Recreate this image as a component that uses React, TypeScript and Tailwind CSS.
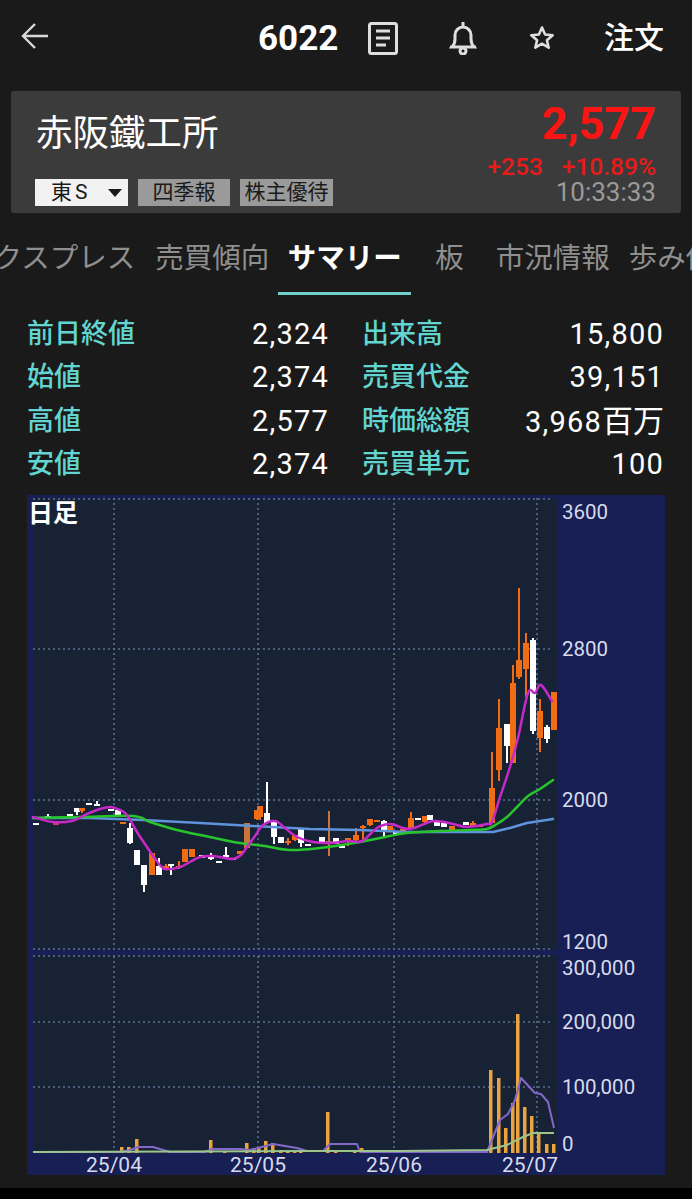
const W = '#ffffff';
const O = '#f26c13';
const M = '#c8743a';

// x, wick top, wick bottom, body top, body bottom, colour
const candles: [number, number, number, number, number, string][] = [
  [36, 823, 825, 823, 825, W], [48, 814, 819, 816, 819, W], [56, 822, 825, 822, 825, '#d9386a'],
  [70, 814, 819, 814, 819, W], [77, 808, 815, 808, 812, W], [82, 808, 813, 808, 811, O],
  [89, 803, 805, 803, 805, W], [97, 801, 806, 804, 806, W], [111, 809, 811, 809, 811, W],
  [118, 810, 815, 810, 815, W], [123, 822, 824, 822, 824, O], [130, 823, 844, 828, 843, W],
  [137, 850, 865, 850, 865, W], [144, 865, 892, 865, 885, W], [152, 853, 875, 853, 875, O],
  [159, 858, 875, 866, 875, W], [166, 864, 870, 866, 870, O], [171, 864, 875, 864, 866, W],
  [179, 861, 869, 866, 868, O], [185, 849, 862, 849, 862, O], [192, 849, 857, 849, 857, O],
  [202, 855, 858, 855, 858, W], [211, 853, 860, 855, 859, W], [219, 861, 863, 861, 863, W],
  [226, 847, 857, 855, 857, W], [233, 858, 860, 858, 860, W], [240, 851, 854, 851, 854, O],
  [247, 823, 848, 823, 848, M], [257, 810, 820, 810, 819, O], [260, 806, 820, 806, 817, O],
  [267, 782, 823, 813, 823, W], [274, 821, 844, 822, 837, W], [281, 837, 843, 837, 843, W],
  [288, 838, 845, 841, 843, O], [295, 835, 841, 835, 840, O], [301, 829, 847, 829, 843, W],
  [308, 844, 846, 844, 846, W], [322, 837, 844, 837, 844, W], [329, 811, 856, 841, 844, M],
  [336, 838, 844, 838, 844, W], [342, 846, 848, 846, 848, W], [348, 838, 846, 838, 840, O],
  [356, 828, 841, 835, 840, O], [363, 825, 840, 826, 828, O], [370, 819, 826, 819, 825, O],
  [377, 820, 822, 820, 822, O], [384, 820, 837, 821, 830, W], [390, 826, 831, 826, 831, O],
  [396, 832, 834, 832, 834, W], [403, 829, 831, 829, 831, O], [411, 812, 829, 818, 829, O],
  [418, 818, 820, 818, 820, W], [425, 816, 825, 816, 822, O], [430, 815, 820, 815, 820, W],
  [437, 821, 826, 821, 826, W], [444, 823, 827, 823, 827, W], [452, 826, 830, 826, 830, O],
  [466, 822, 825, 822, 825, W], [473, 821, 826, 823, 826, O], [480, 825, 827, 825, 827, O],
  [492, 752, 823, 788, 823, O], [499, 699, 781, 728, 770, O], [507, 724, 763, 724, 746, W],
  [513, 665, 763, 683, 763, O], [519, 588, 679, 660, 677, O], [526, 633, 697, 643, 669, O],
  [533, 638, 734, 640, 731, W], [540, 699, 752, 711, 738, O], [547, 725, 743, 727, 739, W],
  [554, 692, 730, 692, 730, O],
];

const ma5: [number, number][] = [
  [33, 817], [53, 822], [72, 821], [85, 815], [97, 810], [110, 807], [120, 810], [127, 815], [137, 832], [147, 847],
  [156, 860], [165, 869], [180, 867], [190, 862], [200, 857], [213, 856], [225, 858], [233, 859], [241, 855], [247, 847],
  [255, 836], [263, 825], [275, 821], [285, 828], [297, 837], [313, 842], [330, 843], [348, 841], [362, 841], [377, 828],
  [390, 824], [410, 829], [433, 821], [453, 824], [467, 827], [487, 824], [492, 822], [500, 797], [510, 767], [518, 738],
  [528, 693], [535, 693], [541, 685], [552, 701],
];
const ma25: [number, number][] = [
  [33, 818], [80, 817], [133, 816], [150, 822], [177, 830], [210, 837], [240, 843], [265, 846], [290, 850], [320, 848],
  [360, 842], [385, 837], [407, 833], [440, 831], [470, 830], [487, 829], [497, 824], [507, 817], [517, 807], [528, 796],
  [540, 789], [553, 780],
];
const ma75 = '33,818 90,818 143,820 200,823 253,826 310,829 360,830 407,832 450,832 493,832 510,828 527,823 540,821 553,819';
const volMa = '33,1152 120,1152 130,1150 138,1147 153,1147 170,1152 205,1152 212,1149 240,1149 250,1150 258,1148 273,1144 297,1148 307,1151 323,1151 330,1144 357,1144 360,1152 487,1152 500,1120 508,1114 515,1100 521,1078 535,1093 541,1094 548,1102 554,1128';
const volMa2 = '33,1152 300,1151 400,1151 487,1150 507,1145 523,1137 533,1133 554,1133';

// x, top of the volume bar
const volumes: [number, number][] = [
  [122, 1147], [129, 1147], [137, 1139], [211, 1140], [225, 1151], [247, 1143], [254, 1148], [259, 1148],
  [266, 1141], [273, 1143], [281, 1150], [288, 1151], [295, 1151], [301, 1151], [328, 1112], [336, 1151],
  [355, 1150], [362, 1148], [410, 1151], [491, 1070], [499, 1078], [506, 1128], [513, 1103], [518, 1014],
  [525, 1107], [532, 1116], [539, 1132], [547, 1144], [554, 1144],
];

const stats = [
  ['前日終値', '2,324', '出来高', '15,800', ''],
  ['始値', '2,374', '売買代金', '39,151', ''],
  ['高値', '2,577', '時価総額', '3,968', '百万'],
  ['安値', '2,374', '売買単元', '100', ''],
];

const priceLabels: [string, number][] = [
  ['3600', 519], ['2800', 656], ['2000', 807], ['1200', 949],
  ['300,000', 975], ['200,000', 1029], ['100,000', 1094], ['0', 1151],
];

const dates: [string, number][] = [['25/04', 114], ['25/05', 258], ['25/06', 394], ['25/07', 530]];

// catmull-rom through the points, the moving averages are drawn smooth
function smooth(pts: [number, number][]) {
  let d = `M${pts[0][0]} ${pts[0][1]}`;
  for (let i = 0; i < pts.length - 1; i++) {
    const p0 = pts[Math.max(i - 1, 0)];
    const p1 = pts[i];
    const p2 = pts[i + 1];
    const p3 = pts[Math.min(i + 2, pts.length - 1)];
    const c1x = p1[0] + (p2[0] - p0[0]) / 6;
    const c1y = p1[1] + (p2[1] - p0[1]) / 6;
    const c2x = p2[0] - (p3[0] - p1[0]) / 6;
    const c2y = p2[1] - (p3[1] - p1[1]) / 6;
    d += ` C${c1x} ${c1y} ${c2x} ${c2y} ${p2[0]} ${p2[1]}`;
  }
  return d;
}

function Chart() {
  return (
    <svg viewBox="27 495 638 680" className="block h-[680px] w-[638px]">
      <rect x="27" y="495" width="638" height="680" fill="#171f54" />
      <rect x="33" y="498" width="525" height="452" fill="#182235" />
      <rect x="33" y="955" width="525" height="198" fill="#182235" />
      <g stroke="#5f7194" strokeWidth="1.5" strokeDasharray="2 3">
        {[499, 649, 800, 949, 956, 1022, 1087].map((y) => (
          <line key={y} x1="33" x2="550" y1={y} y2={y} />
        ))}
        {[114, 258, 394, 537].map((x) => (
          <g key={x}>
            <line x1={x} x2={x} y1="498" y2="949" />
            <line x1={x} x2={x} y1="956" y2="1153" />
          </g>
        ))}
      </g>
      {candles.map(([x, wt, wb, bt, bb, c], i) => (
        <g key={i} fill={c}>
          <rect x={x - 1} y={wt} width="2" height={wb - wt} />
          <rect x={x - 3} y={bt} width="6" height={bb - bt} />
        </g>
      ))}
      <g fill="none" strokeWidth="2.5" strokeLinejoin="round" strokeLinecap="round">
        <polyline points={ma75} stroke="#5f93dc" />
        <path d={smooth(ma25)} stroke="#27c52b" />
        <path d={smooth(ma5)} stroke="#c729c9" />
      </g>
      {volumes.map(([x, y]) => (
        <rect key={x} x={x - 2} y={y} width="3.5" height={1153 - y} fill="#eba33f" />
      ))}
      <g fill="none" strokeWidth="2" strokeLinejoin="round">
        <polyline points={volMa} stroke="#8269c9" />
        <polyline points={volMa2} stroke="#9cc48c" />
      </g>
      <g fill="#d7dbec" fontSize="20.5">
        {priceLabels.map(([t, y]) => (
          <text key={t} x="562" y={y}>{t}</text>
        ))}
        {dates.map(([t, x]) => (
          <text key={t} x={x} y="1172" textAnchor="middle" fontSize="21">{t}</text>
        ))}
      </g>
      <text x="28" y="522" fill="#ffffff" fontSize="25" fontWeight="700">日足</text>
    </svg>
  );
}

export default function App() {
  return (
    <div className="flex h-[1199px] w-[692px] flex-col overflow-hidden bg-[#1a1a1a] text-white [font-family:Roboto,'Noto_Sans_CJK_JP',sans-serif]">
      {/* Header */}
      <div className="flex h-[78px] items-center pb-[2px]">
        <svg viewBox="0 0 28 28" className="mb-[5px] ml-[21px] h-[28px] w-[28px]" fill="none" stroke="#d8d8d8" strokeWidth="2.4">
          <path d="M27 14H2M14 2 2 14l12 12" />
        </svg>
        <span className="ml-[209px] w-[80px] text-[35px] leading-none font-bold">6022</span>
        <svg viewBox="0 0 30 33" className="ml-[30px] h-[33px] w-[30px]" fill="none" stroke="#dedede" strokeWidth="3">
          <rect x="1.5" y="1.5" width="27" height="30" rx="2" />
          <path d="M8 9h14M8 16h14M8 23h10" />
        </svg>
        <svg viewBox="0 0 28 34" className="ml-[51px] h-[34px] w-[28px]" fill="none" stroke="#dedede" strokeWidth="3">
          <path d="M14 1v4M3 26c2-2 3-4 3-8v-4a8 8 0 0 1 16 0v4c0 4 1 6 3 8ZM1 26h26" />
          <circle cx="14" cy="30" r="3" />
        </svg>
        <svg viewBox="0 0 26 26" className="ml-[52px] h-[26px] w-[26px]" fill="none" stroke="#dedede" strokeWidth="2.6" strokeLinejoin="round">
          <path d="M13 2.5l3.1 7 7.6.7-5.8 5 1.8 7.5L13 18.7l-6.7 4 1.8-7.5-5.8-5 7.6-.7Z" />
        </svg>
        <span className="ml-[49px] text-[30px] leading-none font-medium">注文</span>
      </div>

      {/* Stock card */}
      <div className="mx-[11px] mt-[13px] flex h-[122px] justify-between rounded-[3px] bg-[#3b3b3b] pr-[25px] pl-[24px]">
        <div className="flex flex-col">
          <div className="mt-[21px] ml-[1px] text-[36.5px] leading-[44px]">赤阪鐵工所</div>
          <div className="mt-auto mb-[7px] flex gap-[10px] text-[21px] leading-[27px] text-[#1a1a1a]">
            <div className="flex h-[27px] w-[93px] items-center bg-[#f2f2f2] pr-[6px] pl-[16px]">
              <span className="tracking-[3px]">東S</span>
              <span className="mt-[1px] ml-auto h-0 w-0 border-x-[7px] border-t-[8px] border-x-transparent border-t-[#1a1a1a]" />
            </div>
            <div className="h-[27px] w-[92px] bg-[#9a9a9a] text-center">四季報</div>
            <div className="h-[27px] w-[93px] bg-[#9a9a9a] text-center">株主優待</div>
          </div>
        </div>
        <div className="flex flex-col items-end">
          <div className="mt-[8px] text-[45px] leading-[50px] font-bold text-[#fb1414]">2,577</div>
          <div className="mt-[6px] flex gap-[19px] text-[24.5px] leading-[24px] font-medium text-[#e81a1a]">
            <span>+253</span>
            <span>+10.89%</span>
          </div>
          <div className="text-[26px] leading-[27px] text-[#9a9a9a]">10:33:33</div>
        </div>
      </div>

      {/* Tabs */}
      <div className="mt-[22px] flex h-[60px] shrink-0 overflow-hidden text-[28.5px] whitespace-nowrap text-[#8f8f8f]">
        <span className="-ml-[35px] shrink-0 leading-[48px]">エクスプレス</span>
        <span className="ml-[20px] shrink-0 leading-[48px]">売買傾向</span>
        <div className="ml-[9px] flex h-[60px] w-[133px] shrink-0 flex-col items-center border-b-[3px] border-[#6fcfca] font-bold text-white">
          <span className="leading-[48px]">サマリー</span>
        </div>
        <span className="ml-[24px] shrink-0 leading-[48px]">板</span>
        <span className="ml-[32px] shrink-0 leading-[48px]">市況情報</span>
        <span className="ml-[19px] shrink-0 leading-[48px]">歩み値</span>
      </div>

      {/* Stats */}
      <div className="mt-[18px] ml-[27px] flex flex-col">
        {stats.map(([a, b, c, d, unit]) => (
          <div key={a} className="flex h-[43.3px] items-center text-[27px] leading-none">
            <span className="w-[160px] font-medium text-[#62d5d0]">{a}</span>
            <span className="w-[142px] text-right text-[29px] tracking-[1.2px]">{b}</span>
            <span className="ml-[33px] w-[159px] font-medium text-[#62d5d0]">{c}</span>
            <span className="w-[143px] text-right text-[29px] tracking-[1.2px]">
              {d}
              {unit && <span className="text-[31px] tracking-normal">{unit}</span>}
            </span>
          </div>
        ))}
      </div>

      {/* Chart */}
      <div className="mt-[9px] ml-[27px]">
        <Chart />
      </div>

      <div className="mt-auto h-[11px] bg-black" />
    </div>
  );
}
